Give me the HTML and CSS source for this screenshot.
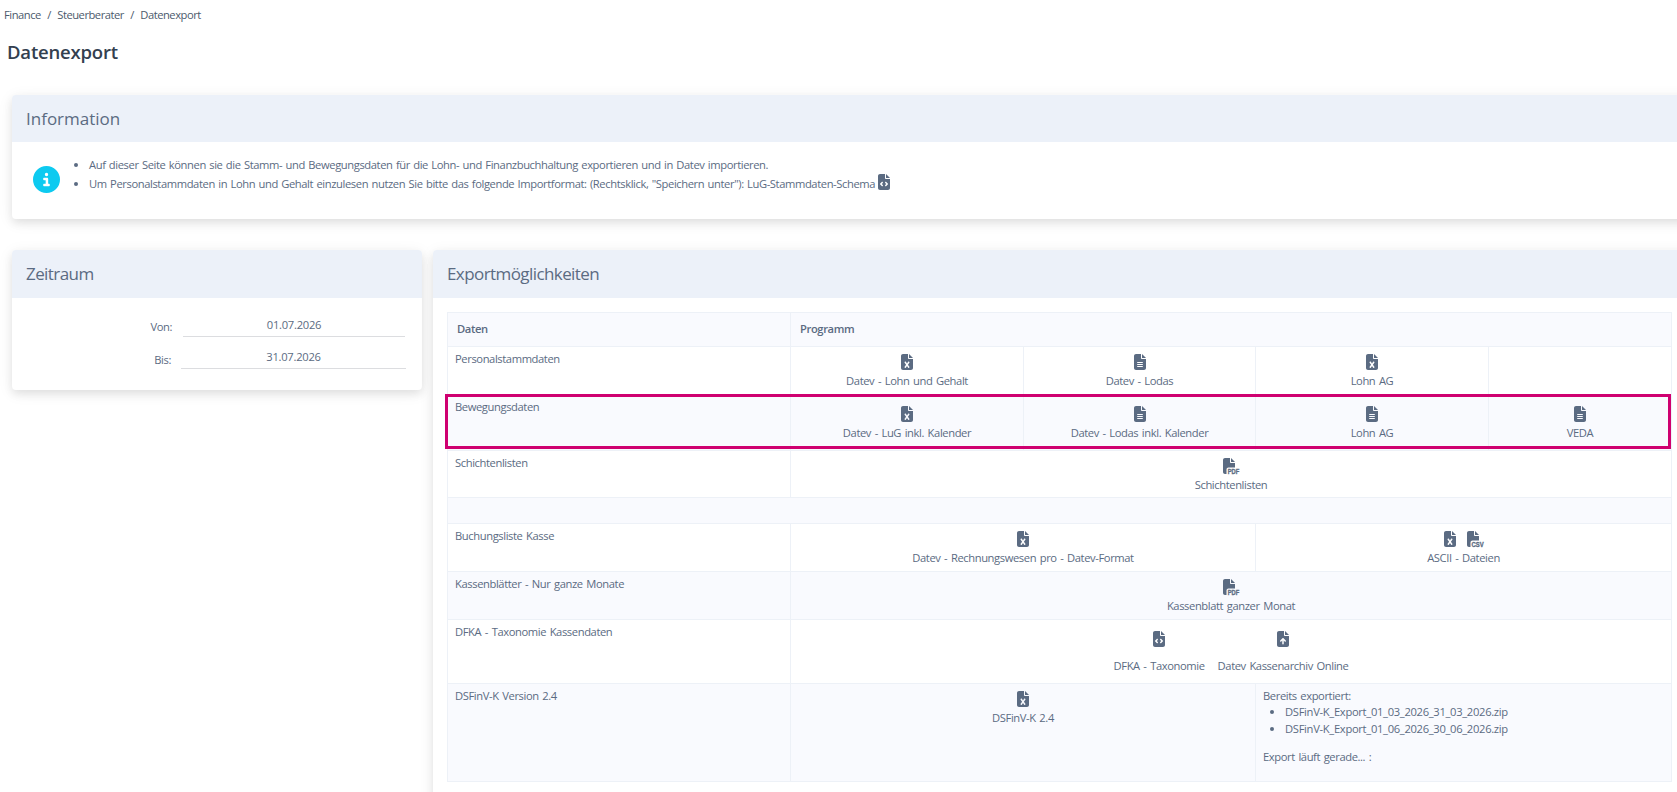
FILE: index.html
```html
<!DOCTYPE html>
<html lang="de">
<head>
<meta charset="utf-8">
<title>Datenexport</title>
<link rel="stylesheet" href="styles.css">
</head>
<body>
<svg class="sprite" aria-hidden="true">
  <symbol id="excel" viewBox="0 0 384 512"><path fill-rule="evenodd" d="M64 0C28.700 0 0 28.700 0 64V448c0 35.300 28.700 64 64 64H320c35.300 0 64-28.700 64-64V160H256c-17.700 0-32-14.300-32-32V0H64zM256 0V128H384L256 0zM155.700 250.200L192 302.100l36.300-51.900c7.600-10.900 22.600-13.500 33.400-5.900s13.500 22.600 5.900 33.400L221.300 344l46.400 66.200c7.600 10.900 5 25.800-5.900 33.400s-25.800 5-33.400-5.900L192 385.800l-36.300 51.900c-7.600 10.900-22.600 13.500-33.400 5.900s-13.500-22.600-5.900-33.400L162.700 344l-46.400-66.200c-7.600-10.900-5-25.800 5.900-33.400s25.800-5 33.400 5.900z"/></symbol>
  <symbol id="lines" viewBox="0 0 384 512"><path fill-rule="evenodd" d="M64 0C28.700 0 0 28.700 0 64V448c0 35.300 28.700 64 64 64H320c35.300 0 64-28.700 64-64V160H256c-17.700 0-32-14.300-32-32V0H64zM256 0V128H384L256 0zM112 256H272c8.800 0 16 7.200 16 16s-7.200 16-16 16H112c-8.800 0-16-7.200-16-16s7.200-16 16-16zm0 64H272c8.800 0 16 7.200 16 16s-7.200 16-16 16H112c-8.800 0-16-7.200-16-16s7.200-16 16-16zm0 64H272c8.800 0 16 7.200 16 16s-7.200 16-16 16H112c-8.800 0-16-7.200-16-16s7.200-16 16-16z"/></symbol>
  <symbol id="code" viewBox="0 0 384 512"><path fill-rule="evenodd" d="M64 0C28.700 0 0 28.700 0 64V448c0 35.300 28.700 64 64 64H320c35.300 0 64-28.700 64-64V160H256c-17.700 0-32-14.300-32-32V0H64zM256 0V128H384L256 0zM153 289l-31 31 31 31c9.400 9.400 9.400 24.600 0 33.900s-24.600 9.400-33.900 0L71 337c-9.400-9.400-9.400-24.600 0-33.900l48-48c9.400-9.400 24.600-9.400 33.900 0s9.400 24.600 0 33.900zM265 255l48 48c9.400 9.400 9.400 24.600 0 33.900l-48 48c-9.400 9.400-24.600 9.400-33.900 0s-9.400-24.600 0-33.900l31-31-31-31c-9.400-9.400-9.400-24.600 0-33.900s24.600-9.400 33.900 0z"/></symbol>
  <symbol id="upload" viewBox="0 0 384 512"><path fill-rule="evenodd" d="M64 0C28.700 0 0 28.700 0 64V448c0 35.300 28.700 64 64 64H320c35.300 0 64-28.700 64-64V160H256c-17.700 0-32-14.300-32-32V0H64zM256 0V128H384L256 0zM216 408c0 13.300-10.700 24-24 24s-24-10.700-24-24V305.900l-31 31c-9.400 9.400-24.600 9.400-33.900 0s-9.400-24.600 0-33.900l72-72c9.400-9.400 24.600-9.400 33.900 0l72 72c9.400 9.400 9.400 24.600 0 33.900s-24.600 9.400-33.900 0l-31-31V408z"/></symbol>
  <symbol id="sheet" viewBox="0 0 512 512"><path d="M0 64C0 28.700 28.700 0 64 0H224V128c0 17.700 14.300 32 32 32H384V304H176c-35.300 0-64 28.700-64 64V512H64c-35.300 0-64-28.700-64-64V64zm384 64H256V0L384 128z"/></symbol>
  <symbol id="info" viewBox="0 0 512 512"><path fill-rule="evenodd" d="M256 512A256 256 0 1 0 256 0a256 256 0 1 0 0 512zM216 336h24V272H216c-13.300 0-24-10.700-24-24s10.700-24 24-24h48c13.300 0 24 10.700 24 24v88h8c13.300 0 24 10.700 24 24s-10.700 24-24 24H216c-13.300 0-24-10.700-24-24s10.700-24 24-24zm40-208a32 32 0 1 1 0 64 32 32 0 1 1 0-64z"/></symbol>
</svg>

<nav class="breadcrumb"><span>Finance</span><span>/</span><span>Steuerberater</span><span>/</span><span>Datenexport</span></nav>
<h1 class="title">Datenexport</h1>

<main class="page">
  <section class="card info-card">
    <h2 class="card-head">Information</h2>
    <div class="info-body">
      <svg class="info-icon"><use href="#info"/></svg>
      <ul class="info-list">
        <li>Auf dieser Seite können sie die Stamm- und Bewegungsdaten für die Lohn- und Finanzbuchhaltung exportieren und in Datev importieren.</li>
        <li>Um Personalstammdaten in Lohn und Gehalt einzulesen nutzen Sie bitte das folgende Importformat: (Rechtsklick, "Speichern unter"): LuG-Stammdaten-Schema <svg class="icon"><use href="#code"/></svg></li>
      </ul>
    </div>
  </section>

  <div class="columns">
    <section class="card period-card">
      <h2 class="card-head tall">Zeitraum</h2>
      <div class="period-body">
        <div class="field"><label>Von:</label><span class="date">01.07.2026</span></div>
        <div class="field wide"><label>Bis:</label><span class="date">31.07.2026</span></div>
      </div>
    </section>

    <section class="card export-card">
      <h2 class="card-head tall">Exportmöglichkeiten</h2>
      <div class="table-wrap">
        <table class="exports">
          <colgroup><col class="c1"><col class="c2"><col class="c3"><col class="c4"><col class="c5"></colgroup>
          <tr class="h34 shade"><th>Daten</th><th colspan="4">Programm</th></tr>
          <tr class="h48">
            <td>Personalstammdaten</td>
            <td class="prog"><svg class="icon"><use href="#excel"/></svg><span>Datev - Lohn und Gehalt</span></td>
            <td class="prog"><svg class="icon"><use href="#lines"/></svg><span>Datev - Lodas</span></td>
            <td class="prog"><svg class="icon"><use href="#excel"/></svg><span>Lohn AG</span></td>
            <td></td>
          </tr>
          <tr class="h56 shade moves">
            <td>Bewegungsdaten</td>
            <td class="prog"><svg class="icon"><use href="#excel"/></svg><span>Datev - LuG inkl. Kalender</span></td>
            <td class="prog"><svg class="icon"><use href="#lines"/></svg><span>Datev - Lodas inkl. Kalender</span></td>
            <td class="prog"><svg class="icon"><use href="#lines"/></svg><span>Lohn AG</span></td>
            <td class="prog"><svg class="icon"><use href="#lines"/></svg><span>VEDA</span></td>
          </tr>
          <tr class="h47">
            <td>Schichtenlisten</td>
            <td class="prog" colspan="4"><svg class="icon typed" viewBox="0 0 512 512"><use href="#sheet"/><text x="150" y="508" textLength="370" lengthAdjust="spacingAndGlyphs">PDF</text></svg><span>Schichtenlisten</span></td>
          </tr>
          <tr class="h26 shade"><td colspan="5"></td></tr>
          <tr class="h48">
            <td>Buchungsliste Kasse</td>
            <td class="prog" colspan="2"><svg class="icon"><use href="#excel"/></svg><span>Datev - Rechnungswesen pro - Datev-Format</span></td>
            <td class="prog" colspan="2"><div class="pair"><svg class="icon"><use href="#excel"/></svg><svg class="icon typed" viewBox="0 0 512 512"><use href="#sheet"/><text x="145" y="508" textLength="390" lengthAdjust="spacingAndGlyphs">CSV</text></svg></div><span>ASCII - Dateien</span></td>
          </tr>
          <tr class="h48 shade">
            <td>Kassenblätter - Nur ganze Monate</td>
            <td class="prog" colspan="4"><svg class="icon typed" viewBox="0 0 512 512"><use href="#sheet"/><text x="150" y="508" textLength="370" lengthAdjust="spacingAndGlyphs">PDF</text></svg><span>Kassenblatt ganzer Monat</span></td>
          </tr>
          <tr class="h64">
            <td>DFKA - Taxonomie Kassendaten</td>
            <td colspan="4">
              <div class="cash-links">
                <div class="cash-link"><svg class="icon"><use href="#code"/></svg><span>DFKA - Taxonomie</span></div>
                <div class="cash-link"><svg class="icon"><use href="#upload"/></svg><span>Datev Kassenarchiv Online</span></div>
              </div>
            </td>
          </tr>
          <tr class="h98 shade">
            <td>DSFinV-K Version 2.4</td>
            <td class="prog" colspan="2"><svg class="icon"><use href="#excel"/></svg><span>DSFinV-K 2.4</span></td>
            <td colspan="2">
              <div>Bereits exportiert:</div>
              <ul class="zip-list"><li>DSFinV-K_Export_01_03_2026_31_03_2026.zip</li><li>DSFinV-K_Export_01_06_2026_30_06_2026.zip</li></ul>
              <div>Export läuft gerade... :</div>
            </td>
          </tr>
        </table>
        <div class="marker"></div>
      </div>
    </section>
  </div>
</main>
</body>
</html>
```
FILE: styles.css
```css
* { box-sizing: border-box; }
body {
  margin: 0;
  height: 792px;
  overflow: hidden;
  background: #fff;
  color: #5b6b82;
  font: 11.2px/18px "Open Sans", "Noto Sans", sans-serif;
  letter-spacing: -.4px;
  word-spacing: 1.1px;
}
.sprite { position: absolute; width: 0; height: 0; }
.breadcrumb { display: flex; gap: 6.4px; padding: 6px 0 0 4px; color: #4c5a6c; letter-spacing: -.48px; }
.title {
  margin: 0;
  padding: 15px 0 0 7px;
  color: #33404f;
  font-size: 18.5px;
  font-weight: 600;
  line-height: 26px;
  letter-spacing: -.2px;
}
.page { padding: 30px 0 0 12px; }
.card {
  border-radius: 4px;
  background: #fff;
  box-shadow: 0 4px 8px rgba(0, 0, 0, .08), 0 3px 16px rgba(0, 0, 0, .07);
}
.card-head {
  height: 47px;
  margin: 0;
  padding-left: 14px;
  border-radius: 4px 4px 0 0;
  background: #ecf1f9;
  font-size: 17px;
  font-weight: 400;
  line-height: 48px;
  letter-spacing: 0;
}
.card-head.tall { height: 48px; letter-spacing: -.58px; }
.info-card { width: 1700px; height: 124px; }
.info-body { display: flex; padding: 13px 0 0 21px; }
.info-icon { width: 27px; height: 27px; margin-top: 11px; fill: #0dcaf0; }
.info-list { margin: 0; padding: 0 0 0 29px; line-height: 19px; word-spacing: .85px; }
.icon { width: 12px; height: 16px; fill: #5b6b82; }
.info-list .icon { vertical-align: -2px; }
.columns { display: flex; align-items: flex-start; gap: 11px; padding-top: 31px; width: 1700px; }
.period-card { width: 410px; height: 140px; }
.period-body { padding: 15px 16px 0 0; }
.field { display: flex; justify-content: flex-end; gap: 11px; height: 32px; padding-right: 1px; }
.field.wide { padding-right: 0; gap: 10px; }
.field label { padding-top: 5px; }
.field.wide label { padding-top: 6px; }
.date {
  width: 222px;
  height: 24px;
  padding-top: 3px;
  border-bottom: 1px solid #dcdde0;
  text-align: center;
  letter-spacing: -.27px;
}
.wide .date { width: 225px; }
.export-card { flex: 1; height: 560px; }
.table-wrap { position: relative; padding: 14px 0 0 14px; }
.exports { width: 1225px; border-collapse: collapse; table-layout: fixed; }
.exports th, .exports td { padding: 3px 7px 0; border: 1px solid #edf1f7; text-align: left; vertical-align: top; }
.exports th { padding: 7px 9px 0; font-weight: 600; }
.c1 { width: 343px; }
.c2, .c4 { width: 233px; }
.c3 { width: 232px; }
.c5 { width: 183px; }
.h26 { height: 26px; }
.h34 { height: 34px; }
.h47 { height: 47px; }
.h48 { height: 48px; }
.h56 { height: 56px; }
.h64 { height: 64px; }
.h98 { height: 98px; }
.shade { background: #f9fafe; }
.exports .prog { padding-top: 7px; text-align: center; }
.prog .icon { display: block; margin: 0 auto; }
.prog span { display: block; padding-top: 2px; }
.exports .moves .prog { padding-top: 11px; }
.prog .typed { width: 16px; overflow: visible; }
.typed text {
  font: 700 222px "Liberation Sans", sans-serif;
  letter-spacing: 0;
  stroke: #5b6b82;
  stroke-width: 10px;
}
.pair { display: flex; justify-content: center; gap: 11px; }
.prog .pair .icon { margin: 0; }
.cash-links { display: flex; justify-content: center; gap: 13px; padding-top: 8px; }
.cash-link { display: flex; flex-direction: column; align-items: center; gap: 10px; }
.zip-list { margin: -2px 0 11px; padding-left: 22px; line-height: 17px; letter-spacing: -.31px; }
.marker {
  position: absolute;
  left: 12px;
  top: 96px;
  width: 1226px;
  height: 55px;
  border: 3px solid #cf0070;
}
```
